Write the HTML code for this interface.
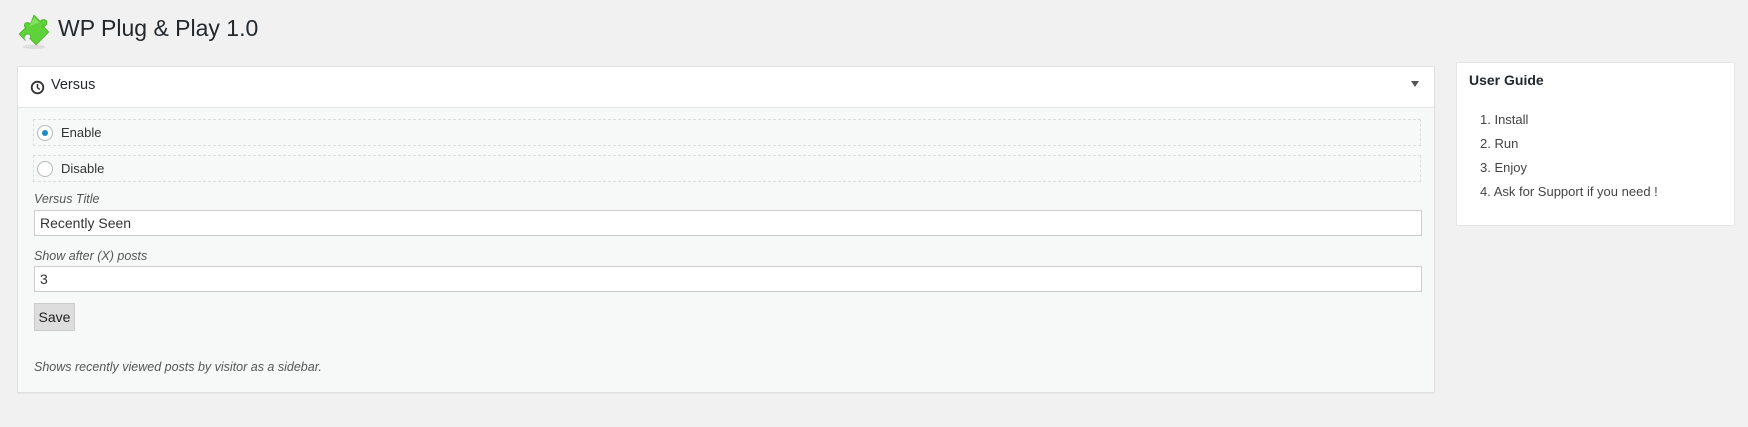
<!DOCTYPE html>
<html><head><style>
body{margin:0;width:1748px;height:427px;background:#f1f1f1;font-family:"Liberation Sans",sans-serif;color:#444;position:relative;overflow:hidden}
.a{position:absolute}
.title{left:58px;top:15px;font-size:23px;color:#23282d}
.panel{left:17px;top:66px;width:1416px;height:325px;background:#f7f8f8;border:1px solid #e0e0e0;box-shadow:0 1px 1px rgba(0,0,0,.04)}
.hdr{left:0;top:0;width:1416px;height:40px;background:#fff;border-bottom:1px solid #e3e3e3}
.dash{left:15px;width:1386px;height:25px;border:1px dashed #ddd}
.radio{left:3px;top:5px;width:14px;height:14px;border:1px solid #b4b9be;border-radius:50%;background:#fff}
.lbl{font-size:13px;color:#333}
.inp{left:16px;width:1386px;height:24px;border:1px solid #ccc;background:#fff;font-size:14px;color:#333;line-height:24px;text-indent:5px}
.it{font-style:italic;font-size:12.5px;color:#555}
.guide{left:1456px;top:62px;width:277px;height:162px;background:#fff;border:1px solid #e5e5e5}
.li{left:23px;font-size:13px;color:#444}
</style></head><body>
<svg class="a" style="left:16px;top:12px" width="36" height="38" viewBox="0 0 34 36">
<ellipse cx="17" cy="33" rx="11" ry="2" fill="#ddd"/>
<path d="M17 3 L23 9 C25 6 30 7 29 11 C28 14 26 14 25 13 L31 19 L19 31 L13 25 C15 23 13 20 10 21 C7 22 7 26 9 27 L3 21 L9 15 C7 13 8 10 11 10 C13 10 14 12 13 13 Z" fill="#5fd23a" stroke="#46b32a" stroke-width="0.8"/>
<path d="M17 5 L22 10 L12 14 Z" fill="#9be878" opacity=".6"/>
</svg>
<div class="a title">WP Plug &amp; Play 1.0</div>
<div class="a panel">
 <div class="a hdr">
  <svg class="a" style="left:12px;top:13px" width="15" height="15" viewBox="0 0 15 15"><circle cx="7.5" cy="7.5" r="5.8" fill="none" stroke="#333" stroke-width="1.8"/><path d="M7.5 4 V7.8 L9.8 9.5" fill="none" stroke="#333" stroke-width="1.5"/></svg>
  <div class="a" style="left:33px;top:10px;font-size:14.5px;color:#23282d">Versus</div>
  <div class="a" style="left:1393px;top:14px;width:0;height:0;border-left:4px solid transparent;border-right:4px solid transparent;border-top:6px solid #555"></div>
 </div>
 <div class="a dash" style="top:52px"><div class="a radio"><div class="a" style="left:4px;top:4px;width:6px;height:6px;border-radius:50%;background:#1e8cbe"></div></div><div class="a lbl" style="left:27px;top:5px">Enable</div></div>
 <div class="a dash" style="top:88px"><div class="a radio"></div><div class="a lbl" style="left:27px;top:5px">Disable</div></div>
 <div class="a it" style="left:16px;top:125px">Versus Title</div>
 <div class="a inp" style="top:143px">Recently Seen</div>
 <div class="a it" style="left:16px;top:182px">Show after (X) posts</div>
 <div class="a inp" style="top:199px">3</div>
 <div class="a" style="left:16px;top:236px;width:39px;height:26px;background:#ddd;border:1px solid #ccc;font-size:14px;color:#222;line-height:26px;text-align:center">Save</div>
 <div class="a it" style="left:16px;top:293px">Shows recently viewed posts by visitor as a sidebar.</div>
</div>
<div class="a guide">
 <div class="a" style="left:12px;top:9px;font-size:14px;font-weight:bold;color:#23282d">User Guide</div>
 <div class="a li" style="top:49px">1. Install</div>
 <div class="a li" style="top:73px">2. Run</div>
 <div class="a li" style="top:97px">3. Enjoy</div>
 <div class="a li" style="top:121px">4. Ask for Support if you need !</div>
</div>
</body></html>
